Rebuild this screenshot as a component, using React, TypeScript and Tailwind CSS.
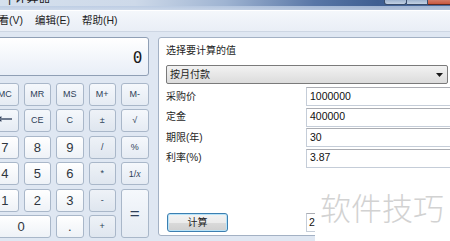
import React from "react";

type Key = { label: React.ReactNode; kind: "mem" | "fn" | "num" | "op"; span?: string };

const keys: Key[] = [
  { label: "MC", kind: "mem" },
  { label: "MR", kind: "mem" },
  { label: "MS", kind: "mem" },
  { label: "M+", kind: "mem" },
  { label: "M-", kind: "mem" },
  {
    label: (
      <svg width="16" height="6" viewBox="0 0 16 6" className="-mt-[4px]">
        <path d="M1 3 H15" stroke="#2a3a55" strokeWidth="1.3" fill="none" />
        <path d="M1 3 L4.5 0.8 M1 3 L4.5 5.2" stroke="#2a3a55" strokeWidth="1.1" fill="none" />
      </svg>
    ),
    kind: "fn",
  },
  { label: "CE", kind: "fn" },
  { label: "C", kind: "fn" },
  { label: "±", kind: "op" },
  { label: "√", kind: "fn" },
  { label: "7", kind: "num" },
  { label: "8", kind: "num" },
  { label: "9", kind: "num" },
  { label: "/", kind: "op" },
  { label: "%", kind: "fn" },
  { label: "4", kind: "num" },
  { label: "5", kind: "num" },
  { label: "6", kind: "num" },
  { label: "*", kind: "op" },
  {
    label: (
      <span>
        1/<span className="italic font-['Liberation_Serif',serif] text-[10px]">x</span>
      </span>
    ),
    kind: "fn",
  },
  { label: "1", kind: "num" },
  { label: "2", kind: "num" },
  { label: "3", kind: "num" },
  { label: "-", kind: "op" },
  { label: "=", kind: "fn", span: "row-span-2" },
  { label: "0", kind: "num", span: "col-span-2" },
  { label: ".", kind: "num" },
  { label: "+", kind: "op" },
];

function CalcKey({ k }: { k: Key }) {
  const base =
    "flex items-center justify-center rounded-[3px] border border-[#a9b7c9] font-['Liberation_Sans',sans-serif] leading-none";
  let style = "";
  if (k.kind === "num") {
    style = "bg-[linear-gradient(#ffffff,#eef2f7)] text-[#2f3640] text-[13px]";
  } else if (k.kind === "mem") {
    style = "bg-[linear-gradient(#f5f8fc,#e5ebf3)] text-[#2e3f58] text-[9px]";
  } else if (k.kind === "op") {
    style = "bg-[linear-gradient(#eef2f7,#dfe6ef)] text-[#2e3f58] text-[9px]";
  } else {
    style = "bg-[linear-gradient(#f5f8fc,#e5ebf3)] text-[#2e3f58] text-[9px]";
  }
  if (k.label === "=") style = "bg-[linear-gradient(#f5f8fc,#e5ebf3)] text-[#2e3f58] text-[17px]";
  return <div className={`${base} ${style} ${k.span ?? ""}`}>{k.label}</div>;
}

export default function App() {
  const cjk = "font-['Liberation_Sans','Noto_Sans_CJK_SC',sans-serif]";
  return (
    <div
      className={`relative w-[450px] h-[241px] overflow-hidden bg-[#dfe7f2] flex flex-col ${cjk}`}
    >
      {/* title bar */}
      <div className="relative h-[10px] shrink-0 flex bg-[linear-gradient(90deg,#d5e0ed_0%,#cdd9e9_30%,#9fb4d2_50%,#5876a6_70%,#3e5e91_84%,#4a6a9c_100%)]">
        <div className="absolute left-0 right-0 bottom-0 h-[4px] bg-[linear-gradient(#b9cae2,#ccd8e9)] opacity-80" />
        <span className="relative ml-[8px] -mt-[8px] text-[12px] leading-[12px] text-[#1b1b1b]">
          |&nbsp;计算器
        </span>
        <div className="relative ml-auto flex h-[5px] mr-0">
          <div className="w-[23px] border-x border-b border-[#3b4d6a] rounded-b-[3px] bg-[linear-gradient(#9fb4cf,#c3d1e3)]" />
          <div className="w-[21px] border-r border-b border-[#3b4d6a] bg-[linear-gradient(#9fb4cf,#c3d1e3)]" />
          <div className="w-[22px] border-b border-[#5c2a22] bg-[linear-gradient(#d37a66,#c8583f)]" />
        </div>
      </div>

      {/* menu bar */}
      <div className="h-[22px] shrink-0 flex items-center gap-[12px] border-t border-white border-b border-b-[#cdd6e3] bg-[linear-gradient(#f4f7fb,#e9eef6)] text-[10.5px] text-[#1e1e1e]">
        <span className="-ml-[12px]">查看(V)</span>
        <span>编辑(E)</span>
        <span>帮助(H)</span>
      </div>

      {/* body */}
      <div className="flex flex-1 pt-[5px]">
        {/* calculator */}
        <div className="-ml-[9px] w-[157.5px] shrink-0 flex flex-col">
          <div className="h-[39px] rounded-[3px] border border-[#8f9fb5] bg-[linear-gradient(#ffffff,#e8eef7)] flex items-center justify-end pr-[5px]">
            <span className="font-['DejaVu_Sans_Mono',monospace] text-[16px] leading-none text-[#1a1a1a] mt-[2px]">
              0
            </span>
          </div>
          <div className="mt-[7px] grid grid-cols-[repeat(5,27.5px)] grid-rows-[repeat(6,23px)] gap-x-[5px] gap-y-[3.4px]">
            {keys.map((k, i) => (
              <CalcKey key={i} k={k} />
            ))}
          </div>
        </div>

        {/* panel */}
        <div className="ml-[9.5px] w-[300px] h-[199px] shrink-0 rounded-[3px] border border-[#a3b1c4] bg-white pl-[7px] flex flex-col text-[10px] text-[#1e1e1e]">
          <div className="mt-[6px] h-[14px] leading-[14px]">选择要计算的值</div>
          <div className="mt-[7px] w-[282px] h-[19px] rounded-[2px] border border-[#7a7a7a] bg-[linear-gradient(#f2f2f2,#dcdcdc)] flex items-center pl-[3px] pr-[3px]">
            <span className="leading-none">按月付款</span>
            <svg width="7" height="4" viewBox="0 0 7 4" className="ml-auto mr-[1px]">
              <path d="M0 0 H7 L3.5 4 Z" fill="#1a1a1a" />
            </svg>
          </div>
          <div className="mt-[3px] flex flex-col gap-y-[1.5px]">
            {[
              ["采购价", "1000000"],
              ["定金", "400000"],
              ["期限(年)", "30"],
              ["利率(%)", "3.87"],
            ].map(([l, v]) => (
              <div key={l} className="h-[19px] flex items-center">
                <span className="w-[140px] leading-none">{l}</span>
                <div className="w-[150px] h-[19px] border border-[#c5cdd8] border-t-[#abadb3] bg-white flex items-center pl-[3px] font-['Liberation_Sans',sans-serif] text-[10.5px] text-[#111]">
                  {v}
                </div>
              </div>
            ))}
          </div>
          <div className="mt-[45.5px] flex items-center">
            <div className="ml-[1px] w-[61px] h-[19px] rounded-[3px] border border-[#3c7fb1] bg-[linear-gradient(#f3f3f3_0%,#ebebeb_50%,#dadada_51%,#cfcfcf_100%)] shadow-[inset_0_0_0_1px_#b8e3f8] flex items-center justify-center">
              <span className="leading-none">计算</span>
            </div>
            <div className="ml-[78px] w-[40px] h-[19px] border border-[#c5cdd8] border-t-[#abadb3] flex items-center pl-[2px] font-['Liberation_Sans',sans-serif] text-[10.5px] text-[#111]">
              2
            </div>
          </div>
        </div>
      </div>

      {/* watermark */}
      <div className="absolute left-[315px] top-[189px] w-[135px] h-[52px] bg-white pl-[5px] pt-[2px]">
        <span className="font-['Noto_Sans_CJK_SC',sans-serif] font-light text-[31px] leading-[31px] text-[#d2d2d2]">
          软件技巧
        </span>
      </div>
    </div>
  );
}
